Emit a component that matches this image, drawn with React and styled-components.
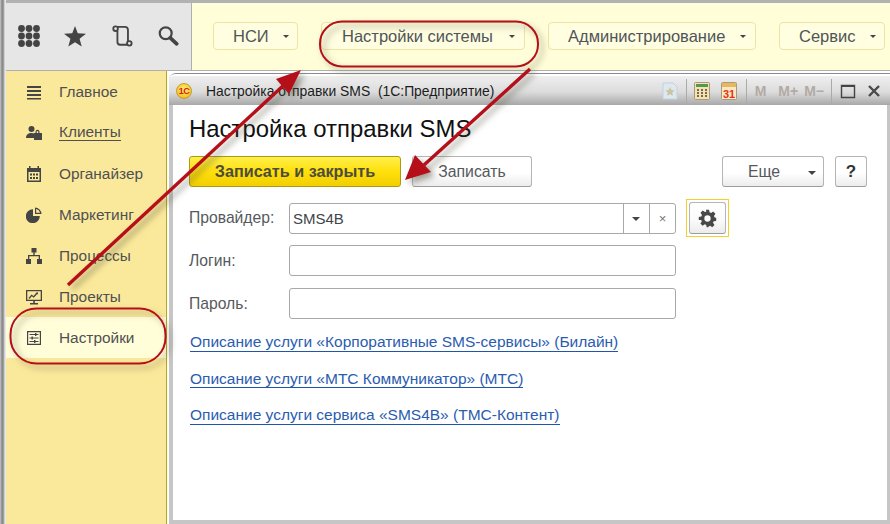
import React from 'react';
import styled, { createGlobalStyle } from 'styled-components';

const Global = createGlobalStyle`
  html, body { margin: 0; padding: 0; background: #fff; }
  body { font-family: "Liberation Sans", Arial, sans-serif; }
  * { box-sizing: border-box; }
`;

const Page = styled.div`
  position: relative;
  width: 890px;
  height: 524px;
  overflow: hidden;
  display: flex;
  background: #fff;
`;
const Edge = styled.div`
  width: 6px;
  flex: none;
  background: linear-gradient(90deg, #c8c8c8 0, #8a8a8a 2px, #8a8a8a 3px, #b4b4b4 4px, #e8e8e8 5px);
`;
const Main = styled.div`
  flex: 1;
  min-width: 0;
  display: flex;
  flex-direction: column;
`;
const TopEdge = styled.div`
  height: 3px;
  flex: none;
  background: #b2b2b2;
`;
const TopBar = styled.div`
  height: 68px;
  flex: none;
  display: flex;
  border-bottom: 1px solid #b0b0b0;
`;
const Tools = styled.div`
  width: 186px;
  flex: none;
  background: #e6e6e6;
  border-right: 1px solid #b0b0b0;
  display: flex;
  align-items: center;
  padding: 0 0 1px 12px;
  gap: 22px;
`;
const ToolIcon = styled.svg`
  width: 22px;
  height: 22px;
  flex: none;
  color: #444;
`;
const Menu = styled.div`
  flex: 1;
  background: #fffed8;
  display: flex;
  align-items: center;
  padding: 0 0 1px 21px;
  gap: 23px;
`;
const MenuButton = styled.div`
  width: ${p => p.$w}px;
  flex: none;
  height: 28px;
  border: 1px solid #efe3a4;
  border-radius: 4px;
  background: #fffee0;
  color: #4f5558;
  font-size: 16.5px;
  display: flex;
  align-items: center;
  padding-left: ${p => p.$pad}px;
  position: relative;
`;
const Caret = styled.span`
  position: absolute;
  right: ${p => p.$r || 8}px;
  top: 50%;
  margin-top: -1px;
  border-left: ${p => (p.$big ? 4 : 3)}px solid transparent;
  border-right: ${p => (p.$big ? 4 : 3)}px solid transparent;
  border-top: ${p => (p.$big ? 4 : 3)}px solid #444;
`;
const Lower = styled.div`
  flex: 1;
  min-height: 0;
  display: flex;
`;
const Sidebar = styled.nav`
  width: 161px;
  flex: none;
  background: #fbe99b;
  border-right: 1px solid #baa717;
  display: flex;
  flex-direction: column;
`;
const NavRow = styled.div`
  height: 41px;
  flex: none;
  display: flex;
  align-items: center;
  padding-left: 20px;
  gap: 17px;
  color: #4f5054;
  font-size: 15.4px;
  background: ${p => (p.$active ? '#fffed8' : 'transparent')};
`;
const NavIcon = styled.svg`
  width: 16px;
  height: 16px;
  flex: none;
  color: #454545;
`;
const NavLabel = styled.span`
  border-bottom: ${p => (p.$under ? '1px solid #4f5054' : 'none')};
  line-height: 16px;
`;
const Desk = styled.div`
  flex: 1;
  min-width: 0;
  padding: 2px 0 0 2px;
`;
const Win = styled.div`
  height: 451px;
  display: flex;
  flex-direction: column;
  background: #c6c6c6;
  border-radius: 7px 0 0 0;
  border-top: 1px solid #8d8d8d;
  padding: 0 3px 4px 4px;
`;
const TitleBar = styled.div`
  height: 31px;
  flex: none;
  margin: 0 -3px 0 -4px;
  border-radius: 6px 0 0 0;
  border-top: 2px solid #fff;
  background: linear-gradient(180deg, #efefef 0, #dcdcdc 55%, #a8a8a8 100%);
  display: flex;
  align-items: center;
  padding: 0 0 0 7px;
  color: #1c1c1c;
  font-size: 13.9px;
`;
const Logo = styled.div`
  width: 16px;
  height: 16px;
  flex: none;
  border-radius: 50%;
  background: radial-gradient(circle at 50% 40%, #fff27a, #f3c21c 75%, #b3841c);
  border: 1px solid #c49b3a;
  color: #d41c1c;
  font-size: 9px;
  font-weight: bold;
  display: flex;
  align-items: center;
  justify-content: center;
  letter-spacing: -0.5px;
  margin-right: 14px;
`;
const TitleText = styled.div`
  flex: 1;
  white-space: pre;
`;
const TitleTools = styled.div`
  display: flex;
  align-items: center;
  height: 100%;
`;
const TitleIcon = styled.svg`
  width: ${p => p.$w || 16}px;
  height: 18px;
  flex: none;
  margin-right: ${p => p.$mr || 0}px;
`;
const Sep = styled.span`
  width: 1px;
  height: 24px;
  background: #aaa;
  margin: 0 ${p => p.$mr || 7}px 0 ${p => p.$ml || 8}px;
`;
const MKey = styled.span`
  color: #b2aaa4;
  font-weight: bold;
  font-size: 14px;
  margin-right: ${p => p.$mr || 0}px;
`;
const Content = styled.div`
  flex: 1;
  background: #fff;
  padding: 9px 0 0 16px;
  position: relative;
`;
const Heading = styled.h1`
  margin: 0;
  font-weight: normal;
  font-size: 23.9px;
  line-height: 30px;
  color: #111;
`;
const ButtonRow = styled.div`
  display: flex;
  margin-top: 12px;
  height: 31px;
`;
const PrimaryButton = styled.div`
  width: 212px;
  height: 31px;
  border: 1px solid #ab9a18;
  border-radius: 3px;
  background: linear-gradient(180deg, #fff04a 0, #ffdf0c 50%, #f2cf00 100%);
  color: #4c4c3c;
  font-weight: bold;
  font-size: 16.2px;
  display: flex;
  align-items: center;
  justify-content: center;
`;
const PlainButton = styled.div`
  width: ${p => p.$w}px;
  height: 31px;
  margin-left: ${p => p.$ml}px;
  border: 1px solid #b5b5b5;
  border-bottom-color: #9d9d9d;
  border-radius: 3px;
  background: linear-gradient(180deg, #fff 0, #fff 55%, #ececec 100%);
  color: ${p => (p.$dark ? '#333' : '#55595c')};
  font-size: ${p => p.$fs || 15.8}px;
  font-weight: ${p => (p.$bold ? 'bold' : 'normal')};
  display: flex;
  align-items: center;
  justify-content: center;
  position: relative;
  padding-right: ${p => p.$pr || 0}px;
`;
const Form = styled.div`
  margin-top: 16px;
  display: flex;
  flex-direction: column;
`;
const FieldRow = styled.div`
  display: flex;
  align-items: center;
  height: ${p => p.$h || 31}px;
  margin-top: ${p => p.$mt || 0}px;
`;
const Label = styled.div`
  width: 100px;
  flex: none;
  color: #55595c;
  font-size: 15.7px;
`;
const Input = styled.div`
  width: 387px;
  height: 31px;
  flex: none;
  border: 1px solid #a8a8a8;
  border-radius: 3px;
  background: #fff;
  display: flex;
  align-items: center;
  color: #40454a;
  font-size: 15px;
  padding-left: 3px;
`;
const InputValue = styled.span`
  flex: 1;
`;
const InputBtn = styled.span`
  width: 26px;
  height: 100%;
  flex: none;
  border-left: 1px solid #a8a8a8;
  display: flex;
  align-items: center;
  justify-content: center;
  color: #777;
  font-size: 13px;
  position: relative;
`;
const GearFrame = styled.div`
  width: 43px;
  height: 38px;
  margin-left: 10px;
  border: 1px solid #f6cf2a;
  display: flex;
  align-items: center;
  justify-content: center;
`;
const GearButton = styled.div`
  width: 37px;
  height: 32px;
  border: 1px solid #b5b5b5;
  border-bottom-color: #9d9d9d;
  border-radius: 3px;
  background: linear-gradient(180deg, #fff 0, #fbfbfb 55%, #ececec 100%);
  display: flex;
  align-items: center;
  justify-content: center;
`;
const Links = styled.div`
  margin-top: 15px;
  display: flex;
  flex-direction: column;
  align-items: flex-start;
  gap: 19px;
  padding-left: 1px;
`;
const DocLink = styled.a`
  color: #2a5cb0;
  font-size: 15.5px;
  line-height: 16.5px;
  text-decoration: none;
  border-bottom: 1px solid #1f55ab;
`;
const Overlay = styled.svg`
  position: absolute;
  inset: 0;
  width: 890px;
  height: 524px;
  pointer-events: none;
  filter: drop-shadow(4px 4px 3px rgba(70, 70, 50, 0.5));
`;

const Ic = ({ children, ...p }) => (
  <NavIcon viewBox="0 0 16 16" fill="currentColor" {...p}>{children}</NavIcon>
);

const nav = [
  ['Главное', <Ic key="a"><path d="M1 2h14v2H1zM1 6h14v2H1zM1 10h14v2H1zM1 14h14v1.6H1z" /></Ic>],
  ['Клиенты', <Ic key="b"><circle cx="5.5" cy="4" r="3" /><path d="M0 13c0-3.4 2.2-5 5.5-5 1.3 0 2.3.2 3 .7V13z" /><path fillRule="evenodd" d="M9.5 8V6.8A2 2 0 0 1 13.5 6.8V8H16v7H8V8zM10.7 8h1.6V6.8a.8.8 0 0 0-1.6 0z" /></Ic>, true],
  ['Органайзер', <Ic key="c"><path fillRule="evenodd" d="M3 0h1.5v2h7V0H13v2h2v14H1V2h2zM2.5 6v8.5h11V6z" /><path d="M4 7.5h2v2H4zM7 7.5h2v2H7zM10 7.5h2v2h-2zM4 11h2v2H4zM7 11h2v2H7zM10 11h2v2h-2z" /></Ic>],
  ['Маркетинг', <Ic key="d"><path d="M7 2.2V9h6.8A7 7 0 1 1 7 2.2z" /><path fillRule="evenodd" d="M9 .5A6.6 6.6 0 0 1 15.5 7H9zM10.2 1.9V5.8h3.9A5.4 5.4 0 0 0 10.2 1.9z" /></Ic>],
  ['Процессы', <Ic key="e"><path d="M5.5 0h5v4.5H8.7V7H14v4h2v5h-5v-5h1.7V8.3H3.3V11H5v5H0v-5h2V7h5.3V4.5H5.5z" /></Ic>],
  ['Проекты', <Ic key="f"><path fillRule="evenodd" d="M0 1h16v11H8.8v2H12v1.4H4V14h3.2v-2H0zM1.3 2.3v8.4h13.4V2.3z" /><path d="M2.5 9l3-3.5 2 1.5 3-3.5 1-.8.7 3-1-.8-3.4 3.8-2-1.5-2.3 2.7z" /></Ic>],
  ['Настройки', <Ic key="g"><path fillRule="evenodd" d="M1 1h14v14H1zM2.2 2.2v11.6h11.6V2.2z" /><path d="M3.5 4h9v1h-9zM3.5 7.5h9v1h-9zM3.5 11h9v1h-9z" /><path d="M9 3h1.4v3H9zM5.5 6.5h1.4v3H5.5zM8 10h1.4v3H8z" /></Ic>, false, true],
];

export default function App() {
  return (
    <Page>
      <Global />
      <Edge />
      <Main>
        <TopEdge />
        <TopBar>
          <Tools>
            <ToolIcon viewBox="0 0 22 22" fill="currentColor">
              {[3.5, 11, 18.5].flatMap(y => [3.5, 11, 18.5].map(x => <circle key={x + '-' + y} cx={x} cy={y} r="3.4" />))}
            </ToolIcon>
            <ToolIcon viewBox="0 0 24 24" fill="currentColor" style={{ marginLeft: 2 }}>
              <path d="M12 1l3 8 9 .5-7 5.5 2.3 8.5L12 18.8l-7.300 4.700 2.300-8.500-7-5.500 9-.5z" />
            </ToolIcon>
            <ToolIcon viewBox="0 0 24 24" fill="none" stroke="currentColor" strokeWidth="2" style={{ marginLeft: 3 }}>
              <circle cx="5" cy="4" r="2.5" />
              <circle cx="20" cy="20" r="2.5" />
              <path d="M7.500 2H15c2.500 0 3.500 1.500 3.500 3.500V17.500M17.500 21.500H10c-2 0-3-1.500-3-3V6.500" />
            </ToolIcon>
            <ToolIcon viewBox="0 0 24 24" fill="none" stroke="currentColor" style={{ marginLeft: 2 }}>
              <circle cx="9.5" cy="9" r="6.5" strokeWidth="2.4" />
              <path d="M14.500 14l7 6.500" strokeWidth="4" strokeLinecap="round" />
            </ToolIcon>
          </Tools>
          <Menu>
            <MenuButton $w={85} $pad={19}>НСИ<Caret /></MenuButton>
            <MenuButton $w={204} $pad={20}>Настройки системы<Caret $r={9} /></MenuButton>
            <MenuButton $w={208} $pad={19}>Администрирование<Caret $r={9} /></MenuButton>
            <MenuButton $w={106} $pad={19}>Сервис<Caret /></MenuButton>
          </Menu>
        </TopBar>
        <Lower>
          <Sidebar>
            {nav.map(([label, icon, under, active]) => (
              <NavRow key={label} $active={active}>
                {icon}
                <NavLabel $under={under}>{label}</NavLabel>
              </NavRow>
            ))}
          </Sidebar>
          <Desk>
            <Win>
              <TitleBar>
                <Logo>1С</Logo>
                <TitleText>Настройка отправки SMS  (1С:Предприятие)</TitleText>
                <TitleTools>
                  <TitleIcon viewBox="0 0 16 18">
                    <path d="M1 1h10l4 4v12H1z" fill="#dfe8ee" stroke="#c3d2dc" />
                    <path d="M8 5l1.500 3 3 .4-2.200 2.100.6 3.200L8 12.200l-2.900 1.500.6-3.200L3.500 8.400l3-.4z" fill="#c9c4a6" />
                  </TitleIcon>
                  <Sep $ml={8} $mr={7} />
                  <TitleIcon viewBox="0 0 16 18">
                    <rect x="0.5" y="0.5" width="15" height="17" rx="1" fill="#f3e2b4" stroke="#a89a7a" />
                    <rect x="2" y="2" width="12" height="3" fill="#4e9a4e" />
                    <path d="M3 7h2v2H3zM7 7h2v2H7zM11 7h2v2h-2zM3 10h2v2H3zM7 10h2v2H7zM11 10h2v2h-2zM3 13h2v2H3zM7 13h2v2H7zM11 13h2v2h-2z" fill="#7a6a4a" />
                  </TitleIcon>
                  <TitleIcon viewBox="0 0 16 18" style={{ marginLeft: 11 }}>
                    <rect x="0.5" y="0.5" width="15" height="17" rx="1" fill="#fbe9c4" stroke="#a89a7a" />
                    <rect x="1" y="1" width="14" height="4" fill="#e8b860" />
                    <text x="8" y="15.5" textAnchor="middle" fontSize="11" fontWeight="bold" fill="#e8301c" fontFamily="Liberation Sans">31</text>
                  </TitleIcon>
                  <Sep $ml={9} $mr={8} />
                  <MKey $mr={12}>M</MKey>
                  <MKey $mr={6}>M+</MKey>
                  <MKey>M−</MKey>
                  <Sep $ml={7} $mr={8} />
                  <TitleIcon viewBox="0 0 16 18" $mr={12}>
                    <path d="M1.500 3.500h13v12h-13z" fill="none" stroke="#444" strokeWidth="1.4" />
                    <path d="M1 3h14v2H1z" fill="#444" />
                  </TitleIcon>
                  <TitleIcon viewBox="0 0 12 18" $w={12} $mr={10}>
                    <path d="M1 4l10 10M11 4L1 14" stroke="#4a4a4a" strokeWidth="2.4" />
                  </TitleIcon>
                </TitleTools>
              </TitleBar>
              <Content>
                <Heading>Настройка отправки SMS</Heading>
                <ButtonRow>
                  <PrimaryButton>Записать и закрыть</PrimaryButton>
                  <PlainButton $w={120} $ml={11}>Записать</PlainButton>
                  <PlainButton $w={102} $ml={190} $pr={18}>Еще<Caret $r={7} $big /></PlainButton>
                  <PlainButton $w={32} $ml={11} $fs={17} $bold $dark>?</PlainButton>
                </ButtonRow>
                <Form>
                  <FieldRow $h={38} $mt={-4}>
                    <Label>Провайдер:</Label>
                    <Input>
                      <InputValue>SMS4B</InputValue>
                      <InputBtn><Caret $r={9} $big /></InputBtn>
                      <InputBtn>×</InputBtn>
                    </Input>
                    <GearFrame>
                      <GearButton>
                        <svg width="19" height="19" viewBox="0 0 24 24" fill="#484848">
                          <path fillRule="evenodd" d="M10 1h4l.6 3.200 1.900.8 2.700-1.800 2.800 2.800-1.800 2.700.8 1.900L23 11v4l-3.200.6-.8 1.900 1.800 2.700-2.800 2.800-2.700-1.800-1.900.8L13 23h-2l-.6-2.800-1.900-.8-2.700 1.800-2.800-2.800 1.800-2.700-.8-1.900L1 14v-4l3.200-.6.8-1.900L3.200 4.800 6 2l2.700 1.800 1.900-.8zM12 8a4 4 0 1 0 0 8 4 4 0 0 0 0-8z" />
                        </svg>
                      </GearButton>
                    </GearFrame>
                  </FieldRow>
                  <FieldRow $mt={8}>
                    <Label>Логин:</Label>
                    <Input />
                  </FieldRow>
                  <FieldRow $mt={12}>
                    <Label>Пароль:</Label>
                    <Input />
                  </FieldRow>
                </Form>
                <Links>
                  <DocLink>Описание услуги «Корпоративные SMS-сервисы» (Билайн)</DocLink>
                  <DocLink>Описание услуги «МТС Коммуникатор» (МТС)</DocLink>
                  <DocLink>Описание услуги сервиса «SMS4B» (ТМС-Контент)</DocLink>
                </Links>
              </Content>
            </Win>
          </Desk>
        </Lower>
      </Main>
      <Overlay viewBox="0 0 890 524" fill="none">
        <rect x="320" y="21.5" width="218" height="45" rx="22" stroke="#b5101a" strokeWidth="2" />
        <rect x="10.5" y="308.5" width="155" height="55" rx="26" stroke="#b5101a" strokeWidth="2" />
        <path d="M68 285L285 84" stroke="#b5101a" strokeWidth="3.4" />
        <path d="M301 70L276 79L289 94z" fill="#b5101a" />
        <path d="M530 69L424 165" stroke="#b5101a" strokeWidth="3.4" />
        <path d="M405 180L415 155L431 172z" fill="#b5101a" />
      </Overlay>
    </Page>
  );
}
